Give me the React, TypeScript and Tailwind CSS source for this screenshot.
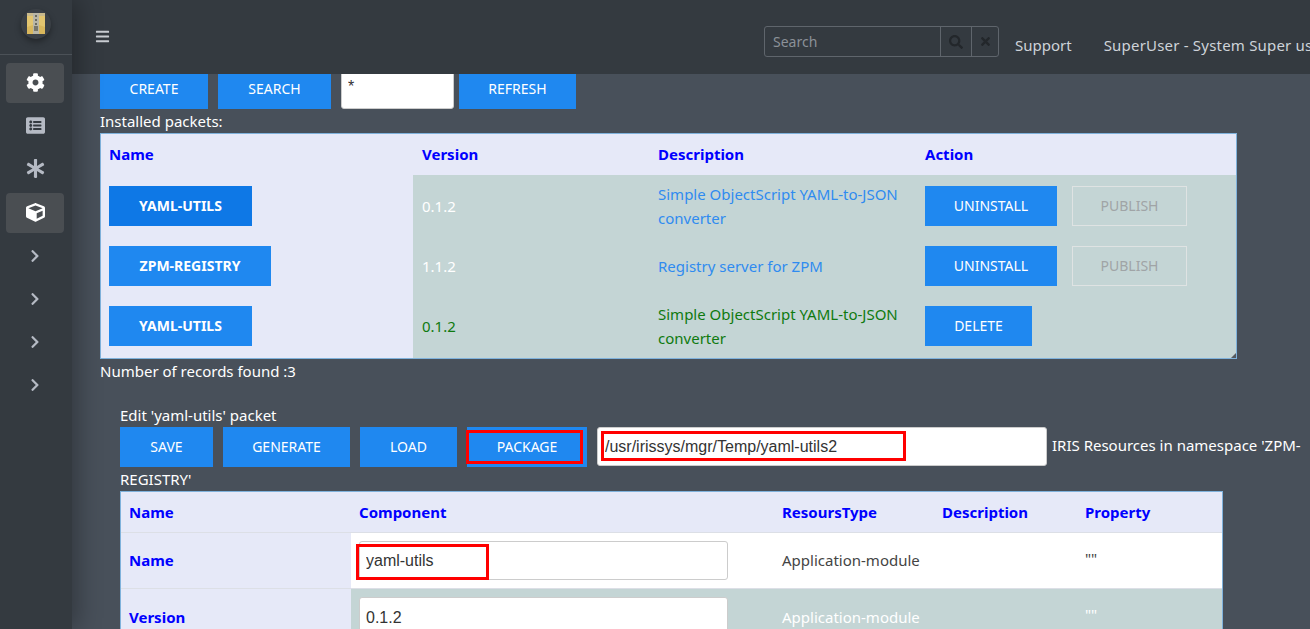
import { FaAsterisk, FaBars, FaChevronRight, FaCog, FaCube, FaListAlt, FaSearch, FaTimes } from "react-icons/fa"

const packets = [
  { name: "YAML-UTILS", width: "w-[143px]", dark: true, version: "0.1.2", description: "Simple ObjectScript YAML-to-JSON converter", tone: "", actions: "installed" },
  { name: "ZPM-REGISTRY", width: "w-[162px]", dark: false, version: "1.1.2", description: "Registry server for ZPM", tone: "", actions: "installed" },
  { name: "YAML-UTILS", width: "w-[143px]", dark: false, version: "0.1.2", description: "Simple ObjectScript YAML-to-JSON converter", tone: "green", actions: "delete" },
]

function ZipLogo() {
  return (
    <svg width="20" height="24" viewBox="0 0 20 24">
      <path d="M1 1h18v21H1z" fill="#e3c56f" />
      <path d="M1 1h18v3H1z" fill="#c9b98c" />
      <path d="M7 1h6v21H7z" fill="#b9b6a6" />
      <path d="M9 3h2v2H9zM9 7h2v2H9zM9 11h2v2H9z" fill="#6b6a60" />
      <path d="M8 14h4v5H8z" fill="#77756a" />
      <path d="M1 15l6-2v9H1zM19 15l-6-2v9h6z" fill="#d9b75c" />
    </svg>
  )
}

function SideItem({ active, children }: { active?: boolean; children: React.ReactNode }) {
  return (
    <div className={`ml-[6px] w-[58px] mb-[3px] h-10 pb-px rounded flex items-center justify-center ${active ? "bg-[#4a4e52] text-white" : "text-[#b5bac4]"}`}>
      {children}
    </div>
  )
}

function Btn({ width, label, bold, dark }: { width: string; label: string; bold?: boolean; dark?: boolean }) {
  return (
    <button className={`${width} h-10 text-white text-sm ${bold ? "font-bold" : ""} ${dark ? "bg-[#0e78e6]" : "bg-[#1f88f0]"}`}>
      {label}
    </button>
  )
}

export default function App() {
  return (
    <div className="h-screen flex overflow-hidden bg-[#48505a] text-[15px] leading-[22px] text-white font-['Noto_Sans','Open_Sans',sans-serif]">
      <aside className="relative z-10 w-[72px] shrink-0 bg-[#343a40] shadow-[6px_0_24px_rgba(0,0,0,0.3)]">
        <div className="h-[55px] border-b border-[#4b5157] flex justify-center pt-[9px]">
          <div className="w-[30px] h-[30px] rounded-full bg-[#3b4046] shadow-[0_3px_6px_rgba(0,0,0,0.35)] flex items-center justify-center">
            <ZipLogo />
          </div>
        </div>
        <div className="pt-2">
          <SideItem active><FaCog size={19} /></SideItem>
          <SideItem><FaListAlt size={19} /></SideItem>
          <SideItem><FaAsterisk size={19} /></SideItem>
          <div className="pt-px">
            <SideItem active><FaCube size={19} /></SideItem>
          </div>
          <SideItem><FaChevronRight size={14} /></SideItem>
          <SideItem><FaChevronRight size={14} /></SideItem>
          <SideItem><FaChevronRight size={14} /></SideItem>
          <SideItem><FaChevronRight size={14} /></SideItem>
        </div>
      </aside>

      <div className="flex-1 min-w-0 flex flex-col">
        <header className="relative z-[5] h-[74px] shrink-0 bg-[#343a40] flex items-start whitespace-nowrap overflow-hidden text-[#ced3d9]">
          <FaBars size={15} className="shrink-0 ml-[23px] mt-[29px] text-[#c9cdd2]" />
          <div className="shrink-0 ml-[654px] mt-[26px] w-[235px] h-[31px] flex border border-[#5f656c] rounded-[3px]">
            <div className="w-[175px] pl-2 text-sm leading-[30px] text-[#8b9198]">Search</div>
            <div className="w-[31px] border-l border-[#5f656c] flex items-center justify-center text-[#23272b]"><FaSearch size={14} /></div>
            <div className="flex-1 border-l border-[#5f656c] flex items-center justify-center text-[#23272b]"><FaTimes size={13} /></div>
          </div>
          <span className="shrink-0 ml-4 mt-[34px]">Support</span>
          <span className="shrink-0 ml-8 mt-[34px] tracking-[0.2px]">SuperUser - System Super user</span>
        </header>

        <main className="flex-1 min-h-0 overflow-hidden pl-7">
          <div className="-mt-[5px] flex items-start gap-[10px]">
            <Btn width="w-[108px]" label="CREATE" />
            <Btn width="w-[113px]" label="SEARCH" />
            <input readOnly value="*" className="w-[113px] h-10 mr-[-5px] px-[6px] pb-1 rounded-[3px] bg-white text-[#333] font-['Liberation_Sans',sans-serif] text-base border border-[#ccc]" />
            <Btn width="w-[117px]" label="REFRESH" />
          </div>
          <div className="mt-px">Installed packets:</div>

          <div className="relative w-[1137px] h-[226px] mt-px border border-[#7fb2dc] bg-[#e6e9f8]">
            <div className="grid grid-cols-[312px_237px_267px_1fr] h-[41px] pb-[2px] items-center font-bold text-[#0000ff]">
              <div className="pl-2">Name</div>
              <div className="pl-[9px]">Version</div>
              <div className="pl-2">Description</div>
              <div className="pl-2">Action</div>
            </div>
            <div className="bg-[#c4d5d5] ml-[312px] h-px" />
            {packets.map((p, i) => (
              <div key={i} className="grid grid-cols-[312px_237px_267px_1fr] h-[60px]">
                <div className="pl-2 flex items-center">
                  <Btn width={p.width} label={p.name} bold dark={p.dark} />
                </div>
                <div className={`pl-[9px] flex items-center bg-[#c4d5d5] ${p.tone ? "text-[#0f7a0f]" : "text-white"}`}>{p.version}</div>
                <div className={`pl-2 pr-4 flex items-center bg-[#c4d5d5] leading-6 ${p.tone ? "text-[#0f7a0f]" : "text-[#2f8bf0]"}`}>{p.description}</div>
                <div className="pl-2 flex items-center gap-[15px] bg-[#c4d5d5]">
                  {p.actions === "installed" ? (
                    <>
                      <Btn width="w-[132px]" label="UNINSTALL" />
                      <button className="w-[115px] h-10 text-sm text-[#a0a4a6] border border-[#dfe3e3]">PUBLISH</button>
                    </>
                  ) : (
                    <Btn width="w-[107px]" label="DELETE" />
                  )}
                </div>
              </div>
            ))}
            <div className="bg-[#c4d5d5] ml-[312px] h-[2px]" />
            <svg className="absolute right-0 bottom-0" width="5" height="5" viewBox="0 0 5 5"><path d="M5 0v5H0z" fill="#55595e" /></svg>
          </div>

          <div className="mt-px">Number of records found :3</div>

          <div className="mt-[22px] pl-5">
            <div>Edit 'yaml-utils' packet</div>
            <div className="mt-px">
              <span className="inline-block mr-[10px] mb-px"><Btn width="w-[93px]" label="SAVE" /></span>
              <span className="inline-block mr-[10px] mb-px"><Btn width="w-[127px]" label="GENERATE" /></span>
              <span className="inline-block mr-[10px] mb-px"><Btn width="w-[97px]" label="LOAD" /></span>
              <span className="relative inline-block mr-[10px] mb-px">
                <Btn width="w-[120px]" label="PACKAGE" />
                <span className="absolute left-[-1px] top-[3px] w-[117px] h-[34px] border-[3px] border-[#ff0000]" />
              </span>
              <span className="relative inline-block mr-[5px]">
                <input readOnly value="/usr/irissys/mgr/Temp/yaml-utils2" className="w-[450px] h-[39px] pl-[7px] pt-px rounded-[3px] bg-white text-[#333] font-['Liberation_Sans',sans-serif] text-base border border-[#ccc]" />
                <span className="absolute left-[4px] top-[4px] w-[305px] h-[30px] border-[3px] border-[#ff0000]" />
              </span>
              <span className="relative -top-px">IRIS Resources in namespace 'ZPM-</span>
              <span>REGISTRY'</span>
            </div>

            <div className="w-[1103px] mt-px border-x border-t border-[#7fb2dc] font-bold text-[#0000ff] bg-[#e6e9f8]">
              <div className="grid grid-cols-[230px_423px_160px_143px_1fr] h-[40px] items-center">
                <div className="pl-2">Name</div>
                <div className="pl-2">Component</div>
                <div className="pl-2">ResoursType</div>
                <div className="pl-2">Description</div>
                <div className="pl-2">Property</div>
              </div>
              <div className="grid grid-cols-[230px_423px_160px_143px_1fr] h-[56px] border-t border-[#dcdfe6] font-normal">
                <div className="pl-2 pb-[2px] flex items-center font-bold">Name</div>
                <div className="relative pl-2 flex items-center bg-white">
                  <input readOnly value="yaml-utils" className="w-[369px] h-[39px] px-[6px] rounded-[3px] text-[#333] font-['Liberation_Sans',sans-serif] text-base border border-[#ccc]" />
                  <span className="absolute left-[5px] top-[11px] w-[133px] h-[36px] border-[3px] border-[#ff0000]" />
                </div>
                <div className="pl-2 pb-[2px] flex items-center bg-white text-[#444]">Application-module</div>
                <div className="bg-white" />
                <div className="pl-2 pb-[6px] flex items-center bg-white text-[#444]">""</div>
              </div>
              <div className="grid grid-cols-[230px_423px_160px_143px_1fr] h-[56px] border-t border-[#dcdfe6] font-normal">
                <div className="pl-2 flex items-center font-bold">Version</div>
                <div className="pl-2 flex items-center bg-[#c4d5d5]">
                  <input readOnly value="0.1.2" className="w-[369px] h-[39px] px-[6px] pt-[2px] rounded-[3px] bg-white text-[#333] font-['Liberation_Sans',sans-serif] text-base border border-[#ccc]" />
                </div>
                <div className="pl-2 flex items-center bg-[#c4d5d5] text-white">Application-module</div>
                <div className="bg-[#c4d5d5]" />
                <div className="pl-2 pb-[6px] flex items-center bg-[#c4d5d5] text-white">""</div>
              </div>
            </div>
          </div>
        </main>
      </div>
    </div>
  )
}
